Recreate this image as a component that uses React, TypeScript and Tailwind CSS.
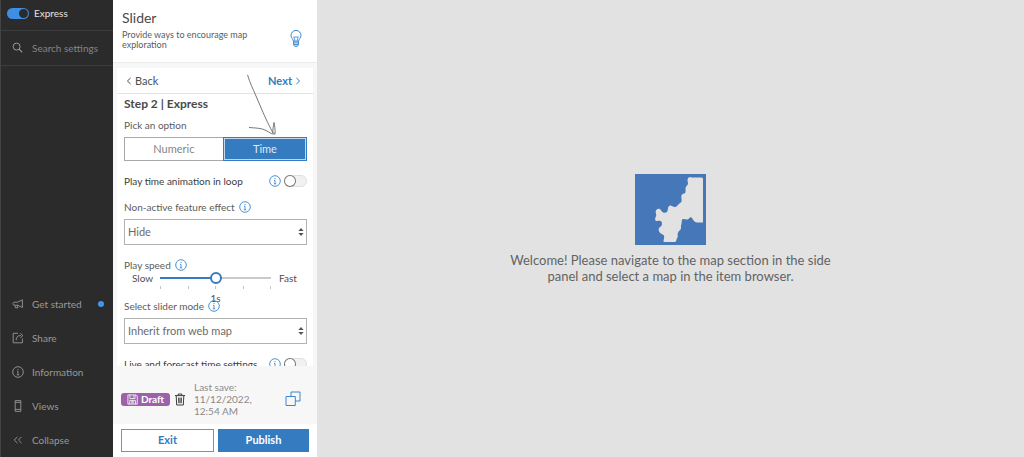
import { useState } from 'react'
import type { ReactNode } from 'react'

const strokeProps = {
  fill: 'none',
  stroke: 'currentColor',
  'aria-hidden': true,
} as const

function InfoIcon({ className = 'size-3 text-[#3a87cf]' }: { className?: string }) {
  return (
    <svg viewBox="0 0 12 12" className={`shrink-0 ${className}`} {...strokeProps}>
      <circle cx="6" cy="6" r="5.3" strokeWidth="0.9" />
      <path d="M6 3v1.1M5 5.4h1v3.3M4.8 8.8h2.4" strokeWidth="0.9" />
    </svg>
  )
}

function SearchIcon() {
  return (
    <svg viewBox="0 0 12 12" className="size-3 shrink-0" {...strokeProps}>
      <circle cx="4.6" cy="4.6" r="3.5" />
      <path d="M7.1 7.1l3.1 3.3" strokeWidth="1.2" />
    </svg>
  )
}

function MegaphoneIcon() {
  return (
    <svg viewBox="0 0 12 12" className="size-3 shrink-0" {...strokeProps}>
      <path d="M10.4 1.8L5.6 4.2H2.2C1.3 4.2.9 5 .9 5.7s.5 1.5 1.3 1.5h3.4l4.8 2.3zM2.8 7.3l.7 2.5h2.4L5.3 7.4" strokeWidth="0.9" />
    </svg>
  )
}

function ShareIcon() {
  return (
    <svg viewBox="0 0 12 12" className="size-3 shrink-0" {...strokeProps}>
      <path d="M6 1.3H1.2v9.5h9.2V6.5M4.2 8.3c0-3 1.2-4.8 4.6-4.8M8.3 1.2l2.6 2.3-2.6 2.3" strokeWidth="0.9" />
    </svg>
  )
}

function PhoneIcon() {
  return (
    <svg viewBox="0 0 12 12" className="size-3 shrink-0" {...strokeProps}>
      <path d="M3.2.6h5.6v10.8H3.2zM3.2 2.4h5.6M3.2 9.4h5.6" strokeWidth="0.9" />
    </svg>
  )
}

function CollapseIcon() {
  return (
    <svg viewBox="0 0 12 12" className="size-3 shrink-0" {...strokeProps}>
      <path d="M5.4 2.8L2.2 6l3.2 3.2M9.6 2.8L6.4 6l3.2 3.2" strokeWidth="0.9" />
    </svg>
  )
}

function BulbIcon() {
  return (
    <svg viewBox="0 0 12 18" className="h-[18px] w-3" {...strokeProps}>
      <path d="M3.4 11.2C3.2 8.800 1 8 1 5.400a5 5 0 0 1 10 0c0 2.600-2.200 3.400-2.400 5.800zM3.600 11.200v3.400l1.200 1.700h2.400l1.200-1.700v-3.400M3.600 12.900h4.800M3.800 14.600h4.400" />
      <path d="M5 11L3.800 6.600l1.100.8L6 6.600l1.100.8 1.100-.8L7 11" strokeWidth="0.8" />
    </svg>
  )
}

function SaveIcon() {
  return (
    <svg viewBox="0 0 12 12" className="size-[11px]" {...strokeProps}>
      <path d="M1 1h9l1.2 1.2V11H1zM3.2 1v4h5.6V1M6.9 1.8v2M3 11V7h6.2v4M4.5 8.4h3.2M4.5 9.8h3.2" strokeWidth="0.9" />
    </svg>
  )
}

function TrashIcon() {
  return (
    <svg viewBox="0 0 12 13" className="h-[13px] w-3" {...strokeProps}>
      <path d="M1 2.6h10M4.2 2.4V1h3.6v1.4M2.2 2.8l.5 9.2h6.6l.5-9.2M4.6 4.6l.2 5.6M6 4.6v5.6M7.4 4.6l-.2 5.6" />
    </svg>
  )
}

function CopyIcon() {
  return (
    <svg viewBox="0 0 16 16" className="size-4" {...strokeProps}>
      <path d="M6 5V1h9v9h-4.5" />
      <path d="M1 5.5h9.3v9H1z" />
    </svg>
  )
}

function ChevronIcon({ left = false }: { left?: boolean }) {
  return (
    <svg viewBox="0 0 6 8" className="h-2 w-1.5" {...strokeProps}>
      <path d={left ? 'M4.6 1L1.4 4l3.2 3' : 'M1.4 1l3.2 3-3.2 3'} />
    </svg>
  )
}

function MapLogo() {
  return (
    <svg viewBox="0 0 71 71" className="size-[71px]" aria-hidden="true">
      <path fill="#4677b8" d="M0 0h71v71H0z" />
      <path
        fill="#e2e2e2"
        d="M56 3.500h10.500q1.500 0 1.500 1.500v43.500h-6c-2.500-.3-3.800-2.500-5-4.500-1-1.500-2.300-.8-3 .5-1.500 2-3.800.5-6 .5-2 .6-.8 4-1.800 5.800-.8 2 .6 3.200-.8 4.900-1.300 1.500-1.500 1-2.400 3-1 2.300.6 3-.8 5.300-1 1.500-.4 3-2.200 4H28.500c-.2-2.500 1.400-4.500.4-6.500-1-1.600-4.300-1.500-5.200-5.300-.3-3 2.400-2.700 3.200-5.400.3-2.600-.4-3.800-2.400-4-2-.1-3.500.8-4.300-.8-.6-2.500 1.500-3.500 1-5.500-.8-2-.6-3.600.1-4.500 1.300-1.700 4-1.500 4.800.4 1.500 2.600 4.400 3.300 6 1.300 1.200-1.800.4-4.700 2-5.700 2-1.300 3.500.9 5.500 1 2.500 0 3-2.300 4.500-3.300 2.300-1.300 2.600-2 2.500-4 0-2-.7-3.700.2-5 1-1.200 3.200-.3 3.700-2.600.5-2-.7-3.700.7-5.500 1.100-1.500 2.200-2 1.700-4-.7-2-.4-4.700.8-5.100q1-.5 2.300-.5z"
      />
    </svg>
  )
}

function Toggle({ label }: { label: string }) {
  const [on, setOn] = useState(false)
  return (
    <button
      type="button"
      role="switch"
      aria-checked={on}
      aria-label={label}
      onClick={() => setOn((v) => !v)}
      className={`flex h-3 w-[23px] shrink-0 items-center rounded-full border border-[#dfdfdf] bg-[#f1f1f1] ${on ? 'justify-end' : ''}`}
    >
      <span className="-ml-px size-3 shrink-0 rounded-full bg-white inset-ring inset-ring-[#757575]" />
    </button>
  )
}

function SidebarItem({ icon, label, dot }: { icon: ReactNode; label: string; dot?: boolean }) {
  return (
    <button type="button" className="flex h-[34px] items-center gap-2 pr-[9px] pl-[11px] text-left text-[#999]">
      {icon}
      <span className="flex-1">{label}</span>
      {dot && <span className="size-1.5 rounded-full bg-[#3e97ec]" />}
    </button>
  )
}

function SelectField({ id, options }: { id: string; options: string[] }) {
  return (
    <div className="relative">
      <select
        id={id}
        className="block h-[26px] w-full appearance-none rounded-none border border-[#b3b3b3] bg-white pr-4 pl-[3px] text-[11px] text-[#6b6b6b]"
      >
        {options.map((option) => (
          <option key={option}>{option}</option>
        ))}
      </select>
      <svg viewBox="0 0 6 8" className="pointer-events-none absolute top-[9px] right-[3px] h-2 w-1.5" aria-hidden="true">
        <path d="M3 0l2.700 3H.3zM3 8L.3 5h5.400z" fill="#555" />
      </svg>
    </div>
  )
}

function Sidebar() {
  const [express, setExpress] = useState(true)
  return (
    <nav className="flex w-[113px] shrink-0 flex-col border-l border-[#444] bg-[#2b2b2b] text-[10px]">
      <div className="flex h-[31px] items-center gap-[5px] border-b border-[#3d3d3d] pb-1 pl-1.5">
        <button
          type="button"
          role="switch"
          aria-checked={express}
          aria-labelledby="express-label"
          onClick={() => setExpress((v) => !v)}
          className={`flex h-[11px] w-[22px] items-center rounded-full bg-[#3e8fe4] px-px ${express ? 'justify-end' : ''}`}
        >
          <span className="size-[9px] rounded-full bg-[#2b2b2b]" />
        </button>
        <span id="express-label" className="text-[#e3e3e3]">Express</span>
      </div>
      <label className="flex h-[35px] items-center gap-2 border-b border-[#3d3d3d] pl-[11px] text-[#999]">
        <SearchIcon />
        <input
          type="text"
          aria-label="Search settings"
          placeholder="Search settings"
          className="w-full min-w-0 bg-transparent outline-none placeholder:text-[#858585]"
        />
      </label>
      <div className="mt-auto flex flex-col">
        <SidebarItem icon={<MegaphoneIcon />} label="Get started" dot />
        <SidebarItem icon={<ShareIcon />} label="Share" />
        <SidebarItem icon={<InfoIcon className="size-3" />} label="Information" />
        <SidebarItem icon={<PhoneIcon />} label="Views" />
        <SidebarItem icon={<CollapseIcon />} label="Collapse" />
      </div>
    </nav>
  )
}

function SpeedSlider() {
  const [speed, setSpeed] = useState(2)
  const pct = speed * 25
  return (
    <div className="flex items-start gap-2 px-2 leading-3 text-[#4f4f4f]">
      <span className="w-5 whitespace-nowrap">Slow</span>
      <div className="flex-1">
        <div className="relative h-3">
          <div className="absolute inset-x-0 top-[5px] h-0.5 bg-[#cacaca]">
            <div className="h-full bg-[#347bbf]" style={{ width: `${pct}%` }} />
          </div>
          <input
            id="play-speed"
            type="range"
            min={0}
            max={4}
            value={speed}
            onChange={(e) => setSpeed(Number(e.target.value))}
            className="absolute -inset-x-1.5 top-0 h-3 w-[calc(100%+12px)] appearance-none bg-transparent [&::-webkit-slider-thumb]:size-3 [&::-webkit-slider-thumb]:appearance-none [&::-webkit-slider-thumb]:rounded-full [&::-webkit-slider-thumb]:border-2 [&::-webkit-slider-thumb]:border-[#347bbf] [&::-webkit-slider-thumb]:bg-white"
          />
        </div>
        <div className="mt-0.5 flex justify-between">
          {[0, 1, 2, 3, 4].map((tick) => (
            <span key={tick} className="h-[3px] w-px bg-[#c4c4c4]" />
          ))}
        </div>
        <div className="mt-[3px] text-center">1s</div>
      </div>
      <span className="w-5">Fast</span>
    </div>
  )
}

function SettingsCard() {
  const [mode, setMode] = useState('Time')
  return (
    <section className="mx-1 mt-[5px] min-h-0 flex-1 overflow-hidden bg-white text-[10px] leading-4">
      <div className="flex h-[26px] items-center justify-between border-b border-[#e3e3e3] pr-3 pl-[9px] text-[11px]">
        <button type="button" className="flex items-center gap-[3px] text-[#4f4f4f]">
          <ChevronIcon left />
          Back
        </button>
        <button type="button" className="flex items-center gap-[3px] font-bold text-[#347bbf]">
          Next
          <ChevronIcon />
        </button>
      </div>
      <div className="pr-1.5 pl-[7px]">
        <h2 className="mt-0.5 text-xs leading-4 font-bold text-[#4a4a4a]">Step 2 | Express</h2>
        <p className="mt-[5px] text-[#5c5c5c]">Pick an option</p>
        <div className="mt-1 flex h-6 text-[11px]">
          <button
            type="button"
            onClick={() => setMode('Numeric')}
            className="flex-[100] border border-r-0 border-[#a8a8a8] text-[#858585]"
          >
            Numeric
          </button>
          <button
            type="button"
            onClick={() => setMode('Time')}
            aria-pressed={mode === 'Time'}
            className="flex-[84] border border-[#347bbf] bg-[#347bbf] text-[#dfeaf5] inset-ring inset-ring-[#c3d8ed]"
          >
            Time
          </button>
        </div>
        <div className="mt-3 flex items-center gap-[3px] text-[#3d3d3d]">
          <span className="flex-1 whitespace-nowrap">Play time animation in loop</span>
          <InfoIcon />
          <Toggle label="Play time animation in loop" />
        </div>
        <div className="mt-2.5 flex items-center gap-1 text-[#5c5c5c]">
          <label htmlFor="effect">Non-active feature effect</label>
          <InfoIcon />
        </div>
        <div className="mt-1">
          <SelectField id="effect" options={['Hide', 'Apply effect']} />
        </div>
        <div className="mt-[13px] flex items-center gap-1 leading-[14px] text-[#5c5c5c]">
          <label htmlFor="play-speed">Play speed</label>
          <InfoIcon />
        </div>
        <SpeedSlider />
        <div className="-mt-1.5 flex items-center gap-1 text-[#5c5c5c]">
          <label htmlFor="slider-mode">Select slider mode</label>
          <InfoIcon />
        </div>
        <div className="mt-1">
          <SelectField id="slider-mode" options={['Inherit from web map', 'Custom']} />
        </div>
        <div className="mt-3 flex items-center gap-[3px] text-[#3d3d3d]">
          <span className="flex-1 whitespace-nowrap">Live and forecast time settings</span>
          <InfoIcon />
          <Toggle label="Live and forecast time settings" />
        </div>
      </div>
    </section>
  )
}

function Panel() {
  return (
    <aside className="relative flex w-[204px] shrink-0 flex-col bg-[#f7f7f7]">
      <header className="flex h-[63px] shrink-0 items-end border-b border-[#ececec] bg-white pr-[15px] pb-3 pl-[9px]">
        <div className="flex-1">
          <h1 className="text-sm leading-5 text-[#4a4a4a]">Slider</h1>
          <p className="mt-0.5 text-[9px] leading-[10px] text-[#5c5c5c]">Provide ways to encourage map exploration</p>
        </div>
        <button type="button" aria-label="Tips" className="mb-0.5 ml-5 text-[#3a87cf]">
          <BulbIcon />
        </button>
      </header>
      <SettingsCard />
      <div className="flex h-[58px] shrink-0 items-center pt-2 pr-4 pl-2">
        <span className="flex h-[13px] w-[49px] items-center justify-center gap-[3px] rounded-[3px] bg-[#9b62ab] text-[10px] font-bold text-white">
          <SaveIcon />
          Draft
        </span>
        <button type="button" aria-label="Delete draft" className="ml-1 text-[#3d3d3d]">
          <TrashIcon />
        </button>
        <p className="ml-2 w-16 text-[10px] leading-3 text-[#8a8a8a]">Last save: 11/12/2022, 12:54 AM</p>
        <button type="button" aria-label="Copy link" className="ml-auto text-[#3a87cf]">
          <CopyIcon />
        </button>
      </div>
      <footer className="flex h-[33px] shrink-0 gap-1 bg-white px-2 py-[5px] text-[11px] font-bold">
        <button type="button" className="flex-1 border border-[#5a9ad4] text-[#347bbf]">Exit</button>
        <button type="button" className="flex-1 bg-[#347bbf] text-white">Publish</button>
      </footer>
      <svg
        viewBox="0 0 30 62"
        className="pointer-events-none absolute top-[74px] left-[134px] h-[62px] w-[30px]"
        {...strokeProps}
      >
        <path
          d="M.5.800C3 9 5.500 14 9 22l6 14c3 7 8 18 11.500 23.500M2 53.500c6 .5 13 .5 17 3 3 1.500 5 3.500 7.500 3.500h1.500c.5-4-.5-9-1-11.500-.8 4-1.500 9-1 10.500"
          stroke="#555"
          strokeWidth="0.8"
        />
      </svg>
    </aside>
  )
}

export default function App() {
  return (
    <div className="flex h-screen overflow-hidden font-[Lato,sans-serif]">
      <Sidebar />
      <Panel />
      <main className="flex flex-1 flex-col items-center justify-center bg-[#e2e2e2]">
        <MapLogo />
        <p className="mt-[7px] max-w-[340px] text-center text-[13px] leading-4 text-[#636363]">
          Welcome! Please navigate to the map section in the side panel and select a map in the item browser.
        </p>
      </main>
    </div>
  )
}
